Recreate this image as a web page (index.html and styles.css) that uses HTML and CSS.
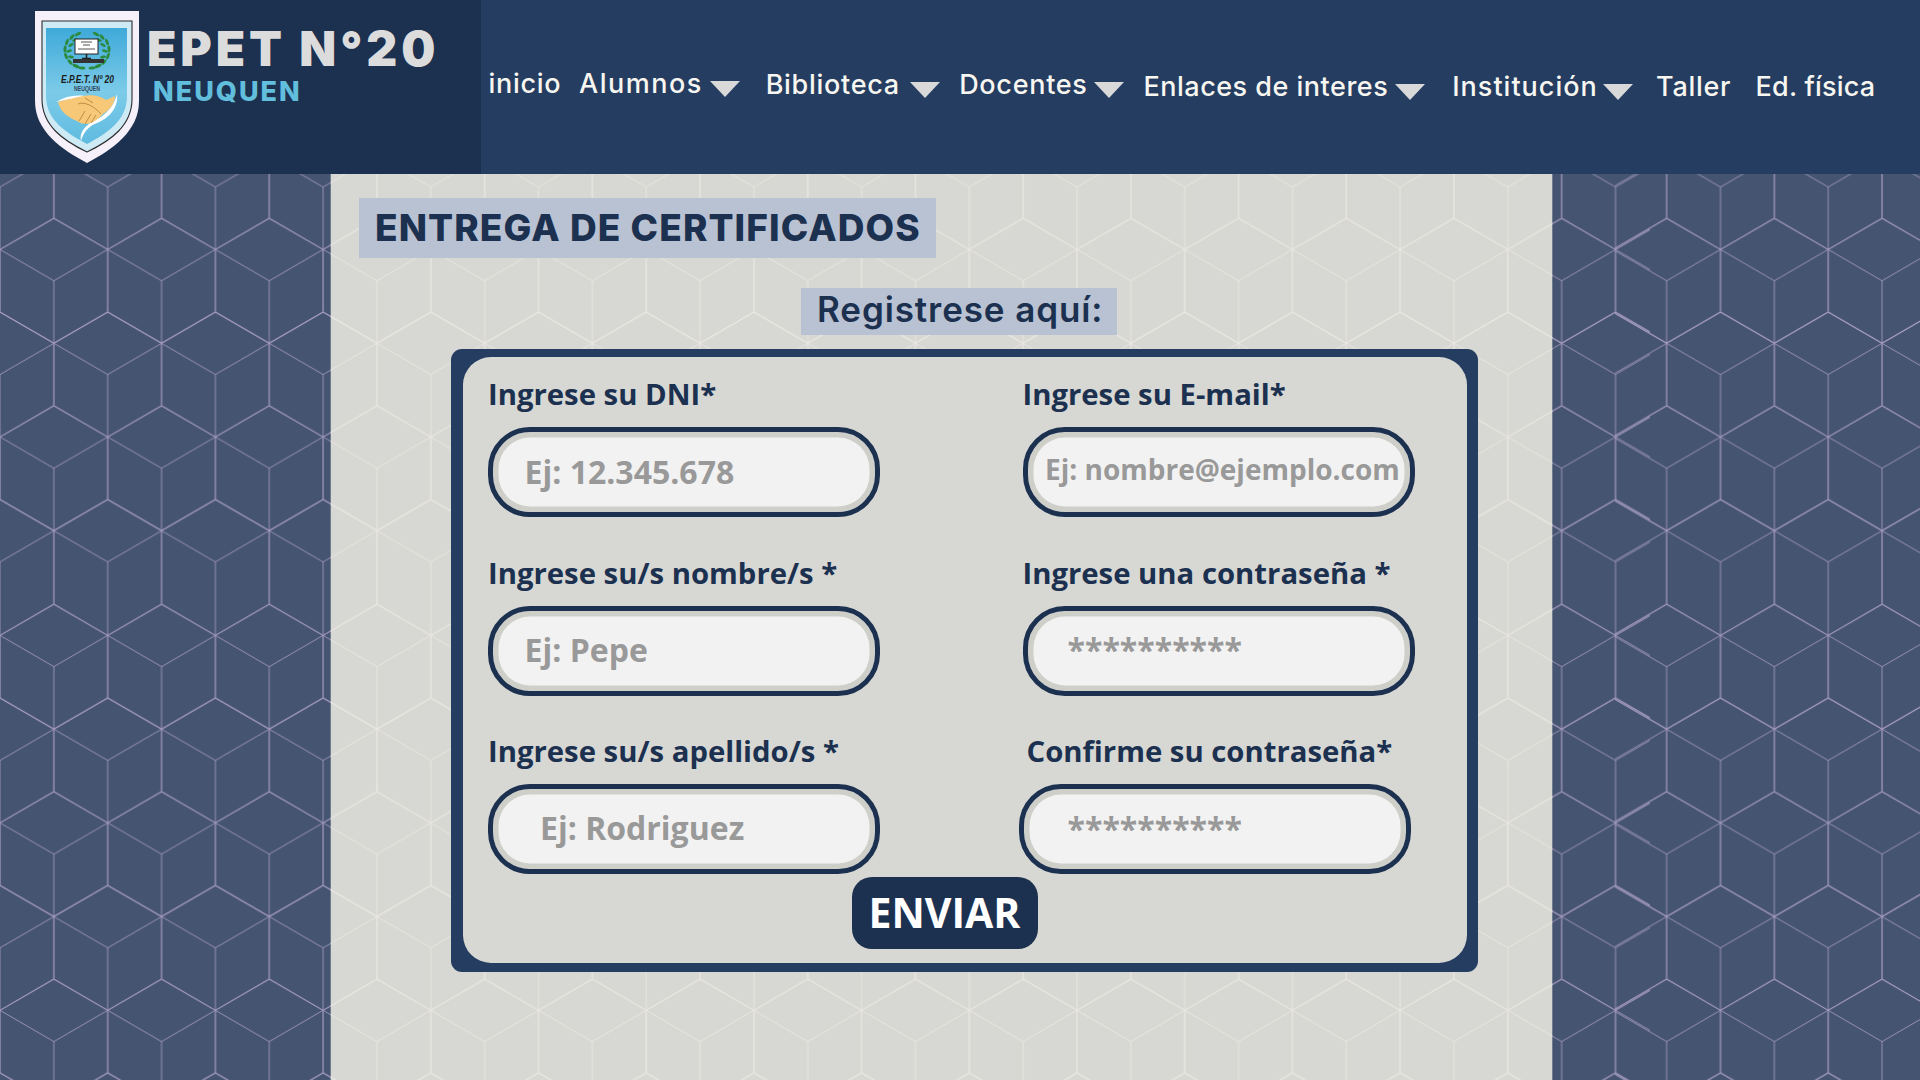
FILE: index.html
```html
<!DOCTYPE html>
<html lang="es">
<head>
<meta charset="utf-8">
<title>EPET N°20 - Entrega de certificados</title>
<link rel="stylesheet" href="styles.css">
</head>
<body>
<header class="topbar">
  <div class="brand">
    <svg class="crest" width="104" height="152" viewBox="0 0 104 152" aria-hidden="true">
      <defs>
        <linearGradient id="crestBlue" x1="0" y1="0" x2="0" y2="1">
          <stop offset="0" stop-color="#3fa9d9"/>
          <stop offset="0.55" stop-color="#7ccbe8"/>
          <stop offset="1" stop-color="#5fbbe0"/>
        </linearGradient>
        <g id="wreathSide" fill="#2b8a3e">
          <ellipse cx="43" cy="23" rx="3.4" ry="1.5" transform="rotate(-30 43 23)"/>
          <ellipse cx="37" cy="26" rx="3.4" ry="1.5" transform="rotate(-50 37 26)"/>
          <ellipse cx="40" cy="29" rx="3" ry="1.3" transform="rotate(-25 40 29)"/>
          <ellipse cx="32" cy="31" rx="3.4" ry="1.5" transform="rotate(-70 32 31)"/>
          <ellipse cx="36" cy="34" rx="3" ry="1.4" transform="rotate(-30 36 34)"/>
          <ellipse cx="30" cy="38" rx="3.4" ry="1.5" transform="rotate(-85 30 38)"/>
          <ellipse cx="34" cy="40" rx="3" ry="1.4" transform="rotate(-15 34 40)"/>
          <ellipse cx="31" cy="45" rx="3.4" ry="1.5" transform="rotate(70 31 45)"/>
          <ellipse cx="36" cy="46" rx="3" ry="1.4" transform="rotate(10 36 46)"/>
          <ellipse cx="35" cy="51" rx="3.4" ry="1.5" transform="rotate(50 35 51)"/>
          <ellipse cx="41" cy="55" rx="3.8" ry="1.6" transform="rotate(25 41 55)"/>
          <ellipse cx="47" cy="57" rx="3.4" ry="1.5" transform="rotate(5 47 57)"/>
        </g>
      </defs>
      <path d="M0,0 H104 V90 C104,120 78,138 52,152 C26,138 0,120 0,90 Z" fill="#f5f0f9"/>
      <path d="M7,10 H97 V88 C97,115 75,130 52,141 C29,130 7,115 7,88 Z" fill="#cdeaf5" stroke="#2b2b2b" stroke-width="1.1"/>
      <path d="M11,17 H92 V85 C92,110 72,122 52,133 C32,122 11,110 11,85 Z" fill="url(#crestBlue)"/>
      <use href="#wreathSide"/>
      <use href="#wreathSide" transform="matrix(-1 0 0 1 104 0)"/>
      <rect x="40" y="28" width="23" height="15" fill="#fff" stroke="#222" stroke-width="1"/>
      <path d="M46,31 H57 M48,34 H55 M43,38 H60" stroke="#555" stroke-width="1"/>
      <path d="M51.5,43 V47 M47,47.5 H56" stroke="#222" stroke-width="1.6"/>
      <rect x="38" y="48" width="31" height="4" fill="#333"/>
      <text class="crest-title" x="26" y="72" textLength="53" lengthAdjust="spacingAndGlyphs">E.P.E.T. Nº 20</text>
      <text class="crest-sub" x="39" y="80" textLength="26" lengthAdjust="spacingAndGlyphs">NEUQUEN</text>
      <path d="M46,130 C44,118 54,112 66,106 C74,100 80,92 82,83 C84,98 72,108 62,112 C54,115 49,120 46,130 Z" fill="#fff"/>
      <path d="M21,91 C32,84 44,83 56,86 C46,87 34,88 21,91 Z" fill="#fff"/>
      <path d="M23,91 C32,88 40,87 48,85 C56,83 66,85 71,89 L80,85 C80,92 75,99 68,103 C60,112 50,116 42,110 C32,106 25,100 23,91 Z" fill="#f6c877"/>
      <path d="M43,93 C50,90 60,96 66,103 M44,110 L50,100 M50,113 L56,103 M56,112 L61,104 M50,87 L58,92" fill="none" stroke="#b5873f" stroke-width="0.9"/>
    </svg>
    <div class="brand-text">
      <div class="brand-name">EPET N°20</div>
      <div class="brand-city">NEUQUEN</div>
    </div>
  </div>
  <nav class="nav">
    <a class="nav-item nav-inicio">inicio</a>
    <a class="nav-item nav-alumnos"><span class="nav-label">Alumnos</span><i class="caret"></i></a>
    <a class="nav-item nav-biblioteca"><span class="nav-label">Biblioteca</span><i class="caret"></i></a>
    <a class="nav-item nav-docentes"><span class="nav-label">Docentes</span><i class="caret"></i></a>
    <a class="nav-item nav-enlaces"><span class="nav-label">Enlaces de interes</span><i class="caret"></i></a>
    <a class="nav-item nav-institucion"><span class="nav-label">Institución</span><i class="caret"></i></a>
    <a class="nav-item nav-taller">Taller</a>
    <a class="nav-item nav-fisica">Ed. física</a>
  </nav>
</header>

<main class="stage">
  <svg class="backdrop" width="1920" height="906" viewBox="0 0 1920 906" aria-hidden="true">
    <defs>
      <g id="cubeThick" fill="none" stroke-width="1.15">
        <path d="M0,31.2 L53.85,0 L107.7,31.2 M0,93.7 L53.85,125 L107.7,93.7 M53.85,125 V187.45 M0,31.2 V93.7 M107.7,31.2 V93.7"/>
      </g>
      <g id="cubeThin" fill="none" stroke-width="0.8">
        <path d="M0,31.2 L53.85,62.5 L107.7,31.2 M0,156.2 L53.85,125 L107.7,156.2 M53.85,62.5 V125 M0,156.2 V187.45 M107.7,156.2 V187.45 M0,0 V31.2 M107.7,0 V31.2"/>
      </g>
      <pattern id="sideA" class="lines-side" patternUnits="userSpaceOnUse" x="0" y="44.3" width="107.7" height="187.45"><use href="#cubeThick"/><use href="#cubeThin"/></pattern>
      <pattern id="sideB" class="lines-side" patternUnits="userSpaceOnUse" x="0" y="55.3" width="107.7" height="187.45"><use href="#cubeThick"/><use href="#cubeThin"/></pattern>
      <pattern id="sideC" class="lines-side" patternUnits="userSpaceOnUse" x="-2.7" y="44.3" width="107.7" height="187.45"><use href="#cubeThick"/><use href="#cubeThin"/></pattern>
      <pattern id="sideD" class="lines-side" patternUnits="userSpaceOnUse" x="-2.7" y="55.3" width="107.7" height="187.45"><use href="#cubeThick"/><use href="#cubeThin"/></pattern>
      <pattern id="panelA" class="lines-panel" patternUnits="userSpaceOnUse" x="0" y="44.3" width="107.7" height="187.45"><use href="#cubeThick"/><use href="#cubeThin"/></pattern>
      <pattern id="panelB" class="lines-panel" patternUnits="userSpaceOnUse" x="0" y="55.3" width="107.7" height="187.45"><use href="#cubeThick"/><use href="#cubeThin"/></pattern>
    </defs>
    <rect class="fill-side" width="1920" height="906"/>
    <rect x="0" y="0" width="1650" height="401" fill="url(#sideA)"/>
    <rect x="0" y="401" width="1650" height="505" fill="url(#sideB)"/>
    <rect x="1615" y="0" width="305" height="401" fill="url(#sideC)"/>
    <rect x="1615" y="401" width="305" height="505" fill="url(#sideD)"/>
    <rect class="fill-panel" x="330.7" y="0" width="1221.6" height="906"/>
    <rect x="330.7" y="0" width="1221.6" height="401" fill="url(#panelA)"/>
    <rect x="330.7" y="401" width="1221.6" height="505" fill="url(#panelB)"/>
  </svg>

  <section class="panel">
    <h1 class="page-title">ENTREGA DE CERTIFICADOS</h1>
    <h2 class="page-sub">Registrese aquí:</h2>
    <form class="form-frame">
      <div class="form-body">
        <div class="form-grid">
          <div class="field">
            <div class="field-label">Ingrese su DNI*</div>
            <div class="pill"><span class="hint">Ej: 12.345.678</span></div>
          </div>
          <div class="field">
            <div class="field-label">Ingrese su E-mail*</div>
            <div class="pill pill-email"><span class="hint hint-email">Ej: nombre@ejemplo.com</span></div>
          </div>
          <div class="field">
            <div class="field-label">Ingrese su/s nombre/s *</div>
            <div class="pill pill-short"><span class="hint">Ej: Pepe</span></div>
          </div>
          <div class="field">
            <div class="field-label">Ingrese una contraseña *</div>
            <div class="pill pill-secret"><span class="hint hint-secret">**********</span></div>
          </div>
          <div class="field">
            <div class="field-label">Ingrese su/s apellido/s *</div>
            <div class="pill pill-wide"><span class="hint">Ej: Rodriguez</span></div>
          </div>
          <div class="field field-shift">
            <div class="field-label">Confirme su contraseña*</div>
            <div class="pill pill-secret"><span class="hint hint-secret">**********</span></div>
          </div>
        </div>
        <button class="send" type="button">ENVIAR</button>
      </div>
    </form>
  </section>
</main>
</body>
</html>
```
FILE: styles.css
```css
* { box-sizing: border-box; }

html, body {
  margin: 0;
  padding: 0;
  width: 1920px;
  height: 1080px;
  overflow: hidden;
  background: #455470;
}

/* Header */
.topbar {
  display: flex;
  height: 174px;
  background: #253d60;
}

.brand {
  display: flex;
  align-items: flex-start;
  gap: 8px;
  width: 481px;
  height: 174px;
  padding: 11px 0 0 35px;
  background: #1c3050;
}

.crest { flex: none; }
.crest-title { font: italic 700 11px "Liberation Sans", sans-serif; fill: #1b1b1b; }
.crest-sub { font: 700 7px "Liberation Sans", sans-serif; fill: #33465c; }

.brand-text { padding-top: 13.5px; }

.brand-name {
  font: 900 48px/48px Inter, sans-serif;
  letter-spacing: 3.9px;
  color: #dcdcdc;
  white-space: nowrap;
}

.brand-city {
  margin: 4px 0 0 6px;
  font: 800 27px/30px Inter, sans-serif;
  letter-spacing: 2px;
  color: #62bedd;
}

.nav {
  display: flex;
  align-items: flex-start;
  padding: 67px 0 0 7.5px;
  font: 500 27px/34px Inter, sans-serif;
  letter-spacing: 0.7px;
  color: #f7f6f0;
  white-space: nowrap;
}

.nav-item { display: flex; flex: none; align-items: flex-start; gap: 8.5px; }
.nav-label { display: block; flex: none; }

.caret {
  display: block;
  flex: none;
  width: 0;
  height: 0;
  margin-top: 13.5px;
  border-left: 15.5px solid transparent;
  border-right: 15.5px solid transparent;
  border-top: 16px solid #d9d9d9;
}

.nav-inicio { width: 72.5px; }
.nav-alumnos { margin-left: 18px; letter-spacing: 1.5px; gap: 9.5px; }
.nav-alumnos .nav-label { width: 121px; }
.nav-biblioteca { margin: 1px 0 0 26.2px; gap: 9.5px; }
.nav-biblioteca .nav-label { width: 135.2px; }
.nav-docentes { margin: 1px 0 0 18.8px; }
.nav-docentes .nav-label { width: 126.3px; }
.nav-enlaces { margin: 3px 0 0 19.5px; letter-spacing: 0.5px; }
.nav-enlaces .nav-label { width: 243px; }
.nav-institucion { margin: 3px 0 0 27.3px; letter-spacing: 1px; }
.nav-institucion .nav-label { width: 142.2px; }
.nav-taller { margin: 3px 0 0 23.1px; width: 73.5px; }
.nav-fisica { margin: 3px 0 0 26px; letter-spacing: 0.2px; }

/* Canvas */
.stage {
  position: relative;
  height: 906px;
  overflow: hidden;
}

.backdrop {
  position: absolute;
  left: 0;
  top: 0;
  display: block;
}

.fill-side { fill: #455470; }
.fill-panel { fill: #d7d8d3; }
.lines-side { stroke: #ab9fc4; }
.lines-panel { stroke: #ece8e3; }

.panel {
  position: relative;
  width: 1221px;
  margin-left: 331px;
  padding-top: 24px;
}

.page-title {
  width: 577px;
  height: 60px;
  margin: 0 0 0 28px;
  padding-left: 16px;
  background: #b8c2d2;
  font: 800 37px/60px Inter, sans-serif;
  letter-spacing: 1.1px;
  color: #1c3050;
  white-space: nowrap;
}

.page-sub {
  width: 316px;
  height: 47px;
  margin: 30px 0 0 470px;
  padding-left: 16px;
  background: #b8c2d2;
  font: 600 35px/43px Inter, sans-serif;
  letter-spacing: 0.9px;
  color: #1c3050;
  white-space: nowrap;
}

/* Form */
.form-frame {
  display: block;
  width: 1027px;
  height: 623px;
  margin: 14px 0 0 120px;
  padding: 8px 11.5px 9px;
  background: #253d60;
  border-radius: 11px;
}

.form-body {
  height: 100%;
  padding: 17px 0 0 25.5px;
  background: #d7d8d3;
  border-radius: 28px;
}

.form-grid {
  display: grid;
  grid-template-columns: 534.5px 1fr;
  row-gap: 35.5px;
}

.field-label {
  height: 40px;
  margin-bottom: 13px;
  font: 700 29.3px/40px "Open Sans", sans-serif;
  color: #1c3050;
  white-space: nowrap;
}

.pill {
  display: flex;
  align-items: center;
  width: 392px;
  height: 90px;
  padding-left: 31.5px;
  background: #f2f2f2;
  border: 5px solid #1c3050;
  border-radius: 42px;
  box-shadow: inset 0 0 0 5.5px #cfcfca;
}

.pill-email { padding: 0 0 6px 17.5px; }
.pill-secret { padding: 0 0 0 40px; }
.pill-wide { padding: 0 0 2px 47px; }
.pill-short { padding-bottom: 2px; }

.field-shift .field-label { margin-left: 4px; }
.field-shift .pill { margin-left: -4px; padding-left: 44px; }

.hint {
  font: 700 32px/40px "Open Sans", sans-serif;
  color: #999;
  white-space: nowrap;
}

.hint-email { font-size: 28px; }
.hint-secret { margin-bottom: 1px; }

.send {
  display: block;
  width: 186px;
  height: 72px;
  margin: 3px 0 0 363.5px;
  padding: 0 0 2px;
  border: 0;
  border-radius: 20px;
  background: #1c3050;
  font: 700 41px/68px "Open Sans", sans-serif;
  color: #fff;
}
```
